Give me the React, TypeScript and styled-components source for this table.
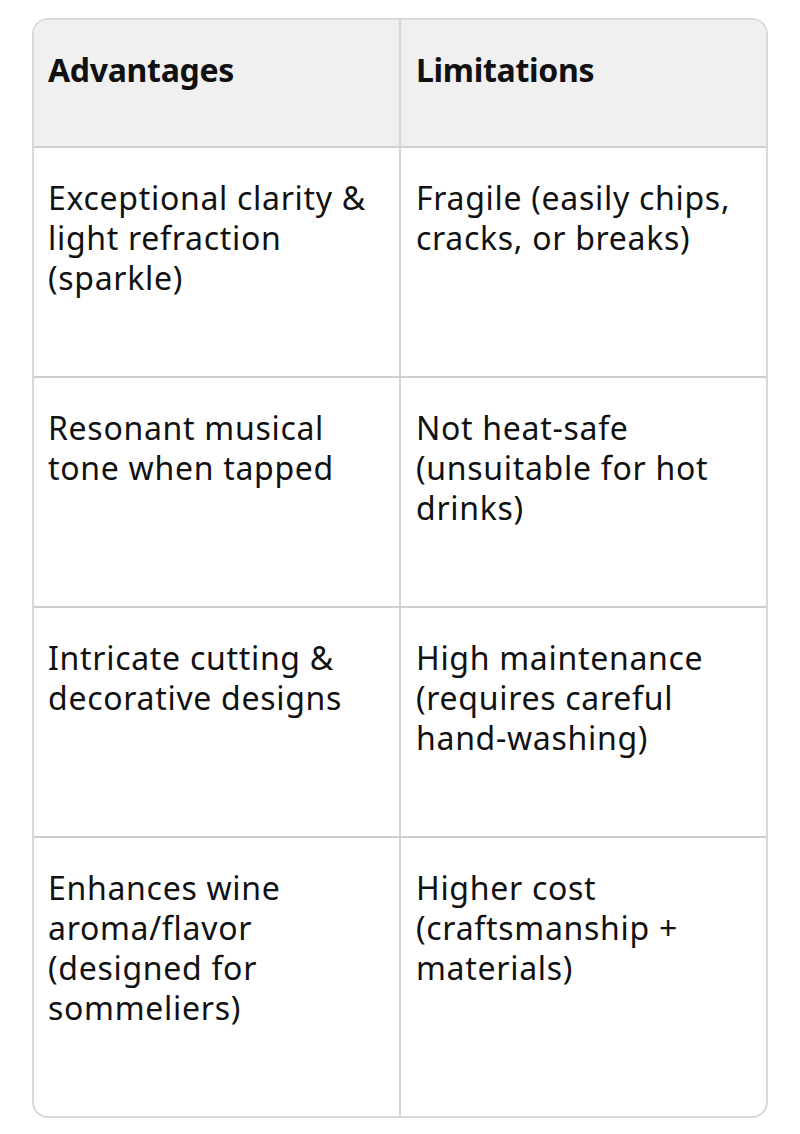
import React from "react";
import styled, { createGlobalStyle } from "styled-components";

const Global = createGlobalStyle`
  html, body { margin: 0; padding: 0; background: #ffffff; }
  body { font-family: "Noto Sans", "Open Sans", sans-serif; color: #111111; }
`;

const Page = styled.div`
  padding: 18px 32px 18px 32px;
  width: 800px;
  box-sizing: border-box;
`;

const Frame = styled.div`
  border: 2px solid #d9d9d9;
  border-radius: 16px;
  overflow: hidden;
`;

const Table = styled.table`
  width: 100%;
  border-collapse: collapse;
  table-layout: fixed;
`;

const HeadCell = styled.th`
  background: #f0f0f0;
  text-align: left;
  vertical-align: top;
  font-weight: 700;
  font-size: 32px;
  line-height: 40px;
  letter-spacing: -0.3px;
  padding: 30px 16px 56px 14px;
  border-bottom: 2px solid #cfcfcf;
  & + & { border-left: 2px solid #d6d6d6; padding-left: 15px; }
`;

const Row = styled.tr<{ $last?: boolean }>`
  & > td {
    padding-bottom: ${(p) => (p.$last ? 88 : 78)}px;
    border-bottom: ${(p) => (p.$last ? "none" : "2px solid #cfcfcf")};
  }
`;

const Cell = styled.td`
  vertical-align: top;
  font-size: 32px;
  line-height: 40px;
  letter-spacing: 0.7px;
  font-weight: 400;
  padding: 30px 14px 78px 14px;
  & + & { border-left: 2px solid #d6d6d6; padding-left: 15px; }
`;

const rows: [string, string][] = [
  ["Exceptional clarity & light refraction (sparkle)", "Fragile (easily chips, cracks, or breaks)"],
  ["Resonant musical tone when tapped", "Not heat-safe (unsuitable for hot drinks)"],
  ["Intricate cutting & decorative designs", "High maintenance (requires careful hand-washing)"],
  ["Enhances wine aroma/flavor (designed for sommeliers)", "Higher cost (craftsmanship + materials)"],
];

export default function App() {
  return (
    <>
      <Global />
      <Page>
        <Frame>
          <Table>
            <thead>
              <tr>
                <HeadCell>Advantages</HeadCell>
                <HeadCell>Limitations</HeadCell>
              </tr>
            </thead>
            <tbody>
              {rows.map(([a, b], i) => (
                <Row key={i} $last={i === rows.length - 1}>
                  <Cell>{a}</Cell>
                  <Cell>{b}</Cell>
                </Row>
              ))}
            </tbody>
          </Table>
        </Frame>
      </Page>
    </>
  );
}
